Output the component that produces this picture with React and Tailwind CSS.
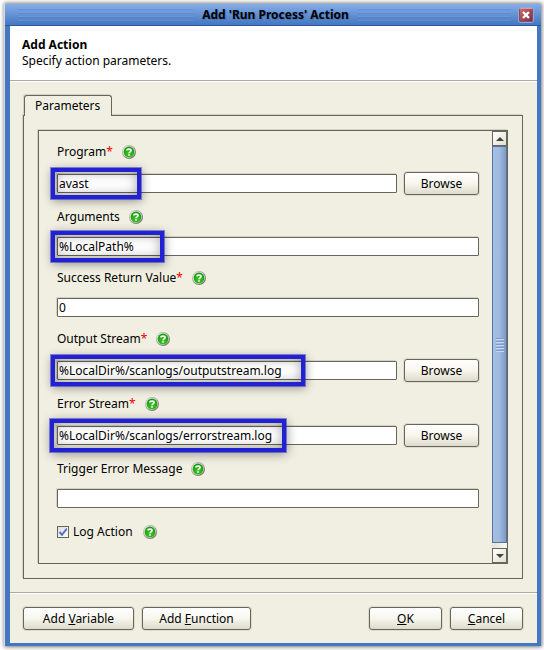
import React, { useState } from "react";

const FIELDS = [
	{
		id: "program",
		label: "Program",
		required: true,
		browse: true,
		value: "avast",
		mark: "-inset-y-[6px] -left-[6px] w-[90px]",
	},
	{
		id: "arguments",
		label: "Arguments",
		value: "%LocalPath%",
		mark: "-inset-y-[6px] -left-[6px] w-[113px]",
	},
	{
		id: "successReturnValue",
		label: "Success Return Value",
		required: true,
		value: "0",
	},
	{
		id: "outputStream",
		label: "Output Stream",
		required: true,
		browse: true,
		value: "%LocalDir%/scanlogs/outputstream.log",
		mark: "-inset-y-[6px] -left-[6px] w-[254px]",
	},
	{
		id: "errorStream",
		label: "Error Stream",
		required: true,
		browse: true,
		value: "%LocalDir%/scanlogs/errorstream.log",
		mark: "-inset-y-[7px] -left-[7px] w-[236px]",
	},
	{
		id: "triggerErrorMessage",
		label: "Trigger Error Message",
		value: "",
	},
];

function HelpIcon() {
	return (
		<svg width="14" height="14" viewBox="0 0 14 14">
			<defs>
				<linearGradient id="helpRing" x1="0" y1="0" x2="1" y2="1">
					<stop offset="0" stopColor="#cfcfca" />
					<stop offset="1" stopColor="#66665e" />
				</linearGradient>
				<radialGradient id="helpFill" cx="0.5" cy="0.7" r="0.7">
					<stop offset="0" stopColor="#3ccc20" />
					<stop offset="1" stopColor="#169410" />
				</radialGradient>
			</defs>
			<circle cx="7" cy="7" r="7" fill="url(#helpRing)" />
			<circle cx="6.8" cy="6.8" r="6.1" fill="#dfe6da" />
			<circle cx="7" cy="7" r="5.4" fill="url(#helpFill)" />
			<path
				d="M4.9 5.6C4.9 3.6 9.1 3.6 9.1 5.6C9.1 7 7 6.8 7 8.3"
				fill="none"
				stroke="#fff"
				strokeWidth="1.6"
			/>
			<rect x="6.2" y="9.2" width="1.6" height="1.5" fill="#fff" />
		</svg>
	);
}

function HelpButton({ topic }) {
	return (
		<button type="button" aria-label={"Help: " + topic} className="block">
			<HelpIcon />
		</button>
	);
}

function PushButton({ className, children }) {
	return (
		<button
			type="button"
			className={
				"h-[23px] shrink-0 rounded-[3px] border border-[#66665a] bg-linear-to-b from-white via-[#f7f6ee] to-[#dcdbca] text-center leading-5 shadow-[0_0_0_1px_#dddccb] " +
				className
			}
		>
			{children}
		</button>
	);
}

function Stripes() {
	return (
		<div className="h-[14px] flex-1 bg-[repeating-linear-gradient(to_bottom,#8db0e6_0px,#8db0e6_1px,#3f6fb8_1px,#3f6fb8_2px,transparent_2px,transparent_4px)] opacity-30" />
	);
}

function TitleBar() {
	return (
		<div className="flex h-[22px] items-center gap-[9px] border-b border-[#2d5a9e] bg-linear-to-b from-[#86ade6] to-[#4377c2]">
			<div className="flex flex-1 pl-[13px]">
				<Stripes />
			</div>
			<h1 className="font-bold whitespace-nowrap [text-shadow:1px_1px_1px_#4a72b0]">
				Add 'Run Process' Action
			</h1>
			<div className="flex flex-1 items-center gap-2 pr-2">
				<Stripes />
				<button
					type="button"
					aria-label="Close"
					className="flex size-[14px] items-center justify-center rounded-[2px] border border-[#8a4a68] border-t-[#d79aa4] bg-linear-to-br from-[#cf6a60] to-[#7c2c48] shadow-[0_0_0_1px_#8fa9d8]"
				>
					<svg width="8" height="8" viewBox="0 0 8 8">
						<path d="M1 1L7 7M7 1L1 7" stroke="#fff" strokeWidth="2.4" />
					</svg>
				</button>
			</div>
		</div>
	);
}

function Field({ field, value, onChange }) {
	return (
		<div className="flex flex-col gap-[10px]">
			<div className="flex h-5 items-center gap-[9px]">
				<label htmlFor={field.id} className="leading-5">
					{field.label}
					{field.required && <span className="text-[#f00000]">*</span>}
				</label>
				<HelpButton topic={field.label} />
			</div>
			<div className="flex items-center gap-[7px]">
				<div className="relative flex min-w-0 flex-1">
					<input
						id={field.id}
						type="text"
						value={value}
						onChange={(e) => onChange(field.id, e.target.value)}
						className="h-[19px] w-full rounded-[1px] border border-[#66665a] bg-white px-px shadow-[-1px_-1px_0_#d3d2c5] outline-none"
					/>
					{field.mark && (
						<div
							className={
								"pointer-events-none absolute border-4 border-[#2222d2] shadow-[1px_2px_10px_rgba(0,0,0,0.4),inset_0_0_12px_rgba(0,0,0,0.35)] outline outline-[#2222d2]/50 " +
								field.mark
							}
						/>
					)}
				</div>
				{field.browse && <PushButton className="w-[75px]">Browse</PushButton>}
			</div>
		</div>
	);
}

function ScrollArrow({ label, d }) {
	return (
		<button
			type="button"
			aria-label={label}
			className="flex h-[15px] shrink-0 items-center justify-center border border-[#66665a] bg-linear-to-br from-white to-[#e2e1d2]"
		>
			<svg width="8" height="4" viewBox="0 0 8 4">
				<path d={d} fill="#44443c" />
			</svg>
		</button>
	);
}

function ScrollBar() {
	return (
		<div className="flex w-[15px] shrink-0 flex-col">
			<ScrollArrow label="Scroll up" d="M4 0L8 4H0Z" />
			<div className="flex flex-1 flex-col bg-linear-to-r from-[#e4e2d6] to-[#faf9f4] pb-[5px]">
				<div className="flex flex-1 items-center justify-center border border-[#5b7396] bg-linear-to-r from-[#a4bfe3] via-[#9fbae0] to-[#7e9bc6]">
					<div className="h-[14px] w-2 bg-[repeating-linear-gradient(to_bottom,#7f9cc9_0px,#7f9cc9_1px,#c6d9f2_1px,#c6d9f2_2px,transparent_2px,transparent_3px)]" />
				</div>
			</div>
			<ScrollArrow label="Scroll down" d="M0 0H8L4 4Z" />
		</div>
	);
}

function App() {
	const [values, setValues] = useState(
		Object.fromEntries(FIELDS.map((f) => [f.id, f.value]))
	);
	const [logAction, setLogAction] = useState(true);

	const cambiarValor = (id, value) => {
		setValues({ ...values, [id]: value });
	};

	return (
		<div className="bg-white pt-1 pr-[3px] pb-1 pl-[5px] font-['Noto_Sans','Open_Sans',sans-serif] text-[12px] leading-4 text-black">
			<div className="shadow-[-1px_0_0_#dcdcd6,0_0_4px_1px_#777]">
				<TitleBar />
				<div className="border-r-[4px] border-b-[3px] border-l-[5px] border-[#4377c2] bg-[#f1efe2]">
					<header className="border-b border-[#a9a9ae] bg-white px-3 py-[11px]">
						<h2 className="font-bold">Add Action</h2>
						<p>Specify action parameters.</p>
					</header>

					<main className="border-t border-white py-[13px] pr-[14px] pl-[13px]">
						<div role="tablist" className="flex pl-px">
							<button
								type="button"
								role="tab"
								aria-selected="true"
								className="relative z-10 -mb-px h-[21px] rounded-t-[3px] border border-b-0 border-[#66665a] bg-[#f1efe2] pr-[11px] pl-[10px] shadow-[-1px_-1px_0_#d3d2c5]"
							>
								Parameters
							</button>
						</div>
						<div
							role="tabpanel"
							className="border border-[#66665a] p-[14px] shadow-[-1px_-1px_0_#d3d2c5]"
						>
							<div className="flex border border-[#66665a] shadow-[-1px_-1px_0_#d3d2c5]">
								<form className="flex min-w-0 flex-1 flex-col gap-3 pt-[11px] pr-[13px] pb-[19px] pl-[18px]">
									{FIELDS.map((field) => (
										<Field
											key={field.id}
											field={field}
											value={values[field.id]}
											onChange={cambiarValor}
										/>
									))}
									<div className="flex h-6 items-center gap-[10px]">
										<label className="relative flex items-center gap-1">
											<input
												type="checkbox"
												checked={logAction}
												onChange={(e) => setLogAction(e.target.checked)}
												className="peer size-3 appearance-none border border-[#66665a] bg-linear-to-br from-[#d8dce4] to-white"
											/>
											<svg
												className="pointer-events-none invisible absolute left-[2px] peer-checked:visible"
												width="8"
												height="8"
												viewBox="0 0 8 8"
											>
												<path
													d="M0.5 4L3 6.8L8 0.5"
													fill="none"
													stroke="#5478b4"
													strokeWidth="2"
												/>
											</svg>
											Log Action
										</label>
										<HelpButton topic="Log Action" />
									</div>
								</form>
								<ScrollBar />
							</div>
						</div>
					</main>

					<footer className="border-t border-[#a9a9a4]">
						<div className="flex gap-2 border-t border-white py-[13px] pr-[14px] pl-[13px]">
							<PushButton className="w-[111px]">
								Add <u>V</u>ariable
							</PushButton>
							<PushButton className="w-[109px]">
								Add <u>F</u>unction
							</PushButton>
							<PushButton className="ml-auto w-[73px]">
								<u>O</u>K
							</PushButton>
							<PushButton className="w-[73px]">
								<u>C</u>ancel
							</PushButton>
						</div>
					</footer>
				</div>
			</div>
		</div>
	);
}

export default App;
